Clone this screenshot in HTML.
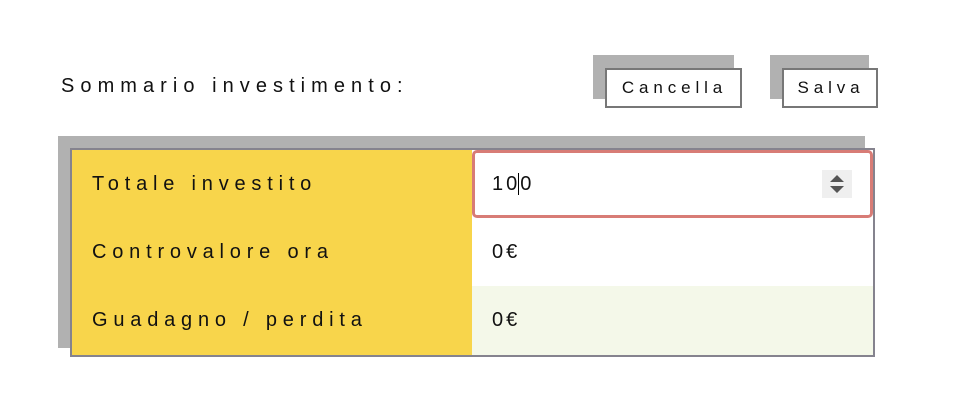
<!DOCTYPE html>
<html><head><style>
body{margin:0;width:972px;height:420px;background:#fff;font-family:"Liberation Sans",sans-serif;position:relative;overflow:hidden;color:#111}
.a{position:absolute}
.t{font-size:20px;letter-spacing:5.8px}
.btnsh{background:#b1b1b1}
.btn{background:#fff;border:2px solid #777;box-sizing:border-box;font-size:17px;letter-spacing:4.9px;display:flex;align-items:center;justify-content:center;padding-left:2px}
</style></head><body>
<div class="a t" style="left:61px;top:75px;letter-spacing:6.05px">Sommario investimento:</div>
<div class="a btnsh" style="left:593px;top:55px;width:141px;height:44px"></div>
<div class="a btn" style="left:605px;top:68px;width:137px;height:40px">Cancella</div>
<div class="a btnsh" style="left:770px;top:55px;width:99px;height:44px"></div>
<div class="a btn" style="left:782px;top:68px;width:96px;height:40px">Salva</div>

<div class="a" style="left:58px;top:136px;width:807px;height:212px;background:#b1b1b1"></div>
<div class="a" style="left:70px;top:148px;width:805px;height:209px;border:2px solid #85838e;box-sizing:border-box;background:#fff"></div>
<div class="a" style="left:72px;top:150px;width:400px;height:205px;background:#f8d54b"></div>
<div class="a" style="left:472px;top:286px;width:401px;height:69px;background:#f4f8e9"></div>
<div class="a t" style="left:92px;top:173px">Totale investito</div>
<div class="a t" style="left:92px;top:241px">Controvalore ora</div>
<div class="a t" style="left:92px;top:309px">Guadagno / perdita</div>
<div class="a" style="left:472px;top:150px;width:401px;height:68px;border:3px solid #d87c76;border-radius:5px;box-sizing:border-box;background:#fff"></div>
<div class="a t" style="left:492px;top:173px;letter-spacing:3px">10<span style="border-left:1px solid #000;margin-left:-2px;padding-left:1px">0</span></div>
<div class="a" style="left:822px;top:170px;width:30px;height:28px;background:#efefef"></div>
<svg class="a" style="left:829px;top:174px" width="16" height="20"><path d="M1 8 L8 1 L15 8Z M1 12 L8 19 L15 12Z" fill="#555"/></svg>
<div class="a t" style="left:492px;top:241px;letter-spacing:3px">0€</div>
<div class="a t" style="left:492px;top:309px;letter-spacing:3px">0€</div>
</body></html>
